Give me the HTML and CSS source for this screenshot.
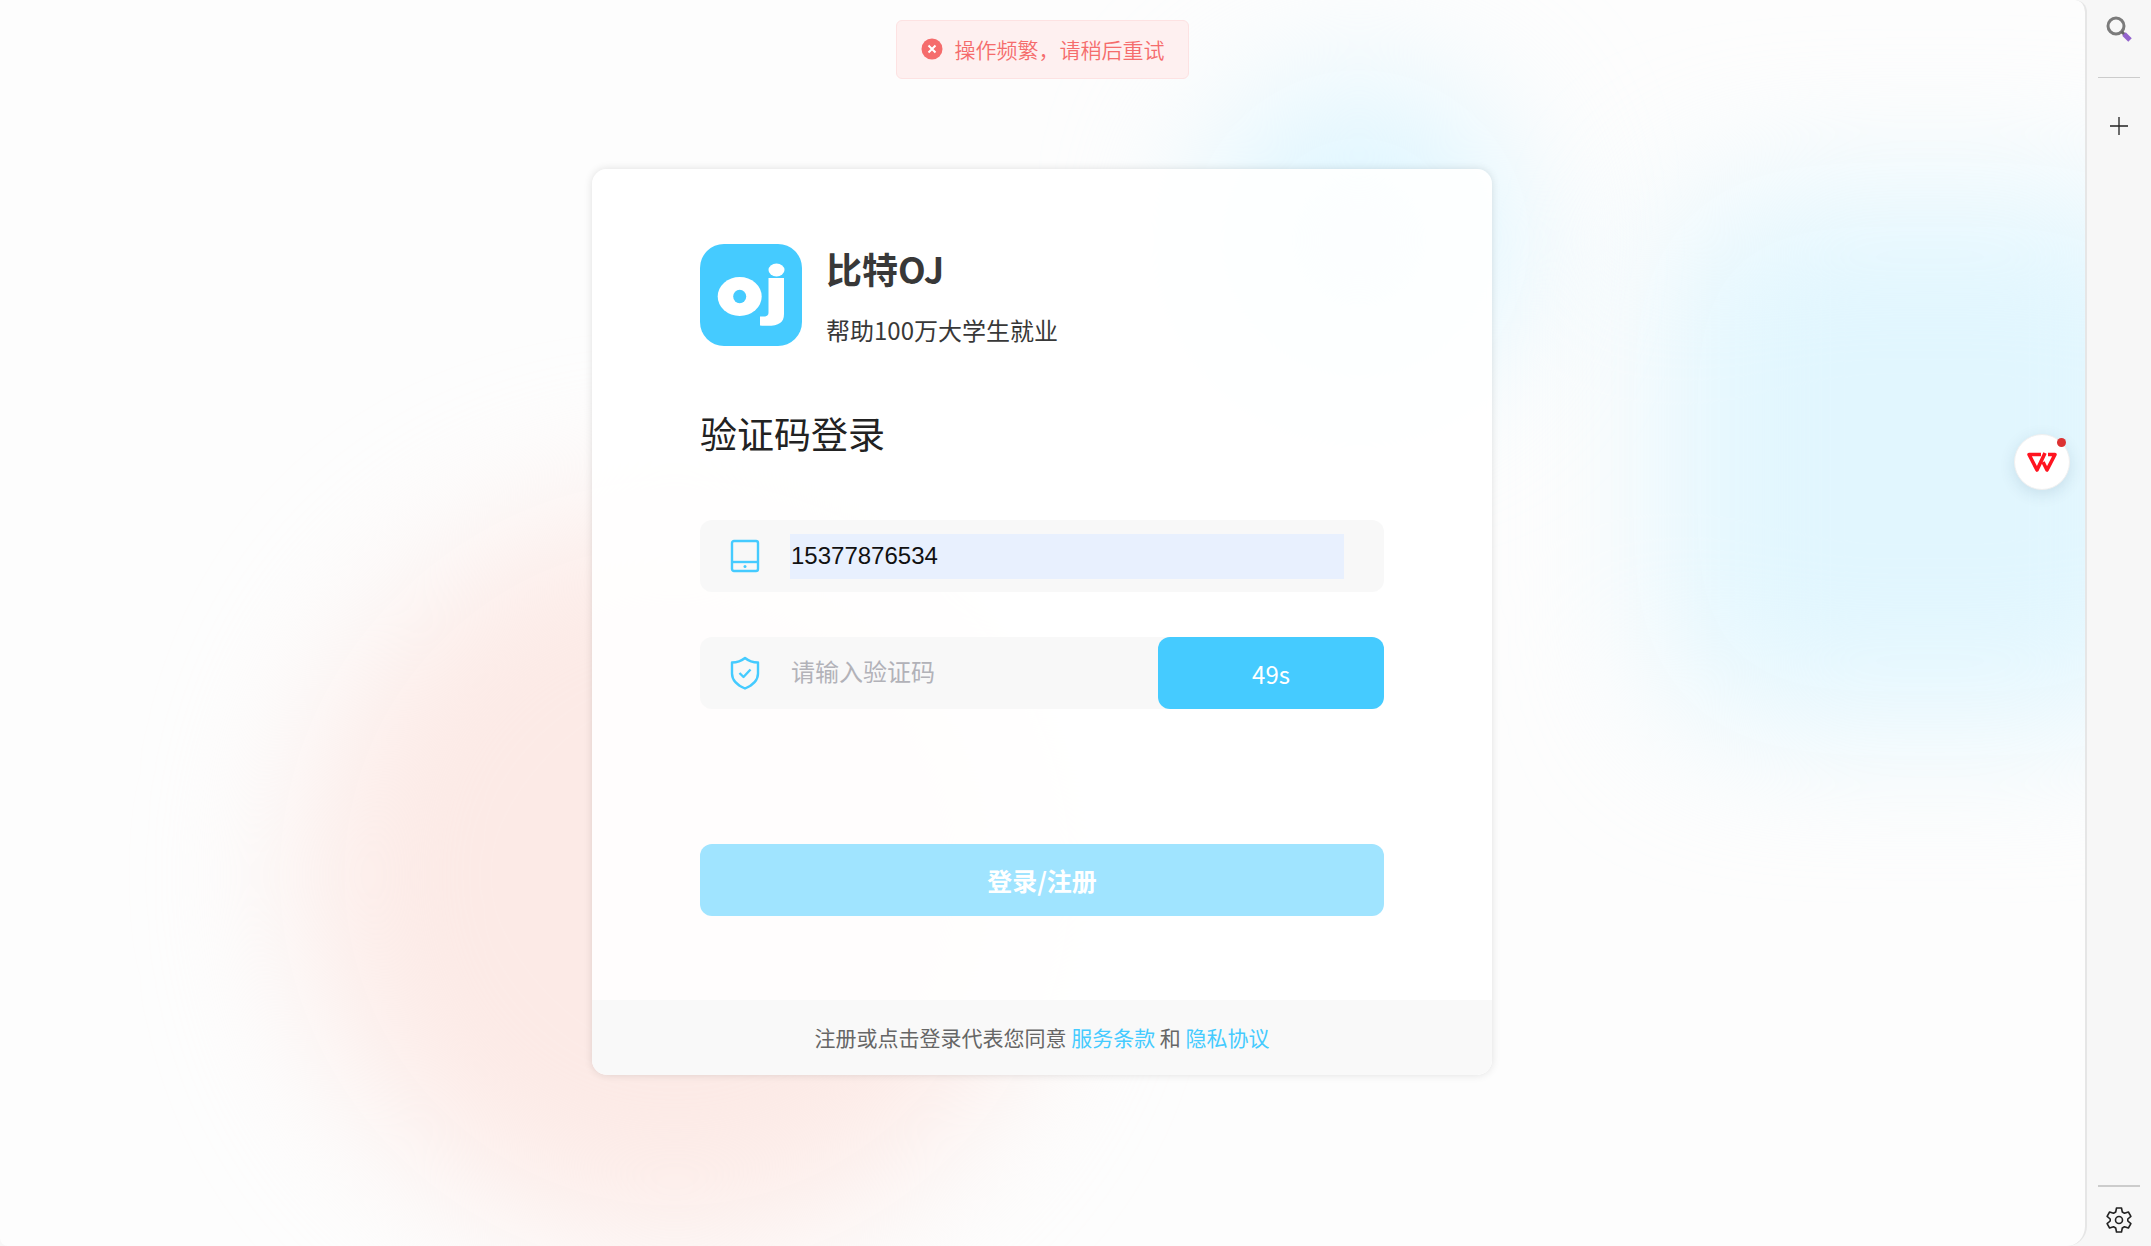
FILE: index.html
```html
<!DOCTYPE html>
<html lang="zh-CN">
<head>
    <meta charset="UTF-8">
    <meta name="viewport" content="width=device-width, initial-scale=1.0">
    <title>比特OJ</title>
    <link rel="stylesheet" href="styles.css">
</head>
<body>
    <main class="page">
        <div class="blob blob-red"></div>
        <div class="blob blob-top"></div>
        <div class="blob blob-right"></div>

        <div class="message" role="alert">
            <svg class="message-icon" viewBox="0 0 22 22" aria-hidden="true">
                <circle cx="11" cy="11" r="10.5" fill="#f56c6c"/>
                <path d="M7.5 7.5l7 7M14.5 7.5l-7 7" stroke="#fff" stroke-width="2"/>
            </svg>
            <span>操作频繁，请稍后重试</span>
        </div>

        <section class="card">
            <div class="card-body">
                <div class="brand">
                    <svg class="logo" viewBox="0 0 102 102" aria-label="oj">
                        <rect width="102" height="102" rx="24" fill="#45cbff"/>
                        <ellipse cx="39.700" cy="52.500" rx="22" ry="19.500" fill="#fff"/>
                        <ellipse cx="39.700" cy="52.500" rx="6.500" ry="6.800" fill="#45cbff"/>
                        <ellipse cx="76.500" cy="26" rx="8" ry="6.500" fill="#fff"/>
                        <path d="M68.500 34h15.500v36c0 10-7 13-24 11.500v-9c6 .5 8.500-.5 8.500-4z" fill="#fff"/>
                    </svg>
                    <div class="brand-text">
                        <h1>比特OJ</h1>
                        <p>帮助100万大学生就业</p>
                    </div>
                </div>

                <h2>验证码登录</h2>

                <form id="loginForm">
                    <div class="form-group">
                        <label for="phone" aria-label="手机号">
                            <svg class="field-icon" viewBox="0 0 32 36" aria-hidden="true">
                                <rect x="3" y="3" width="26" height="30" rx="2"/>
                                <path d="M3 24h26"/>
                                <circle class="dot" cx="16" cy="28.500" r="1.500"/>
                            </svg>
                        </label>
                        <input type="tel" id="phone" class="autofilled" value="15377876534">
                    </div>
                    <div class="form-group code-group">
                        <label for="code" aria-label="验证码">
                            <svg class="field-icon" viewBox="0 0 32 36" aria-hidden="true">
                                <path d="M16 3c3 2.500 8 4.500 13 4.500v11c0 7-6 12-13 15-7-3-13-8-13-15v-11c5 0 10-2 13-4.500z"/>
                                <path d="M10.500 18l4 4 7-7.500"/>
                            </svg>
                        </label>
                        <input type="text" id="code" placeholder="请输入验证码">
                        <button type="button" class="code-button">49s</button>
                    </div>
                    <button type="submit" class="submit-button">登录/注册</button>
                </form>
            </div>
            <footer class="card-footer">
                注册或点击登录代表您同意 <a href="#">服务条款</a> 和 <a href="#">隐私协议</a>
            </footer>
        </section>

        <button type="button" class="float-button" aria-label="WPS">
            <svg viewBox="0 0 32 22" aria-hidden="true">
                <g fill="none" stroke="#ff1420" stroke-width="3.600" stroke-linejoin="round">
                    <path d="M15 3.500H3L11 19 19 2"/>
                    <path d="M22 3.500h7L21 19l-4-8"/>
                </g>
            </svg>
            <span class="badge"></span>
        </button>
    </main>

    <aside class="sidebar">
        <button type="button" class="side-button" aria-label="搜索">
            <svg viewBox="0 0 28 28" aria-hidden="true">
                <circle cx="11" cy="11" r="8" fill="none" stroke="#7b7b7b" stroke-width="3"/>
                <path d="M16.500 16.500l3 3" stroke="#666" stroke-width="3"/>
                <path d="M19 19l6 6" stroke="#9364cd" stroke-width="5"/>
            </svg>
        </button>
        <hr>
        <button type="button" class="side-button" aria-label="添加">
            <svg viewBox="0 0 28 28" aria-hidden="true">
                <path d="M14 5v18M5 14h18" stroke="#222" stroke-width="1.300"/>
            </svg>
        </button>
        <hr class="push">
        <button type="button" class="side-button" aria-label="设置">
            <svg viewBox="0 0 28 28" aria-hidden="true">
                <g fill="none" stroke="#222" stroke-width="1.600" stroke-linejoin="round">
                    <path d="M11.500 2h5l.8 4 2.200 1.300 3.900-1.300 2.500 4.300-3.100 2.700v2l3.100 2.700-2.500 4.300-3.900-1.300-2.200 1.300-.8 4h-5l-.8-4-2.200-1.300-3.900 1.300-2.500-4.300 3.100-2.700v-2l-3.100-2.700 2.500-4.300 3.900 1.300 2.200-1.300z"/>
                    <circle cx="14" cy="14" r="3.500"/>
                </g>
            </svg>
        </button>
    </aside>
</body>
</html>
```
FILE: styles.css
```css
* {
    box-sizing: border-box;
}
body {
    margin: 0;
    min-height: 100vh;
    display: flex;
    background: #f7f7f7;
    font-family: "Noto Sans CJK SC", sans-serif;
}
h1, h2, p {
    margin: 0;
}
button {
    border: none;
    padding: 0;
    font-family: inherit;
    cursor: pointer;
}
.page {
    flex: 1;
    position: relative;
    overflow: hidden;
    display: flex;
    flex-direction: column;
    align-items: center;
    padding: 20px 21px 20px 20px;
    background: #fdfdfd;
    border-right: 2px solid #e6e6e6;
    border-radius: 0 12px 20px 8px;
}

/* background colour spots */
.blob {
    position: absolute;
    filter: blur(75px);
}
.blob-red {
    left: 305px;
    top: 505px;
    width: 740px;
    height: 740px;
    border-radius: 50%;
    background: #fceae6;
}
.blob-top {
    left: 1204px;
    top: 85px;
    width: 310px;
    height: 310px;
    border-radius: 50%;
    background: #dcf5ff;
}
.blob-right {
    right: -110px;
    top: 194px;
    width: 530px;
    height: 530px;
    border-radius: 100px;
    background: #e1f6fe;
}

.message {
    position: relative;
    display: flex;
    align-items: center;
    gap: 12px;
    height: 59px;
    padding: 0 23px 2px 24px;
    border: 1px solid #fde2e2;
    border-radius: 6px;
    background: #fef0f0;
    color: #f56c6c;
    font-family: "Noto Sans CJK SC DemiLight", "Noto Sans CJK SC", sans-serif;
    font-size: 21px;
    line-height: 30px;
}
.message-icon {
    width: 22px;
    height: 22px;
}

.card {
    position: relative;
    width: 100%;
    max-width: 900px;
    margin-top: 90px;
    border-radius: 15px;
    overflow: hidden;
    background: rgba(255, 255, 255, 0.9);
    box-shadow: 0 0 8px rgba(0, 0, 0, 0.12);
}
.card-body {
    padding: 75px 108px 84px;
}
.brand {
    display: flex;
    gap: 24px;
}
.logo {
    width: 102px;
    height: 102px;
}
.brand-text {
    display: flex;
    flex-direction: column;
    justify-content: space-between;
    color: #383838;
}
.brand-text h1 {
    font-size: 36px;
    line-height: 48px;
}
.brand-text p {
    font-size: 24px;
    line-height: 32px;
}
h2 {
    margin-top: 60px;
    color: #222;
    font-size: 37px;
    font-weight: 400;
    line-height: 54px;
}
.form-group {
    display: flex;
    align-items: center;
    height: 72px;
    margin-bottom: 45px;
    padding: 0 40px 0 29px;
    border-radius: 12px;
    background: rgba(246, 246, 246, 0.8);
}
#loginForm {
    margin-top: 60px;
}
.form-group label {
    display: flex;
    margin-right: 29px;
}
.field-icon {
    width: 32px;
    height: 36px;
    fill: none;
    stroke: #45cbff;
    stroke-width: 2.4;
    stroke-linejoin: round;
}
.field-icon .dot {
    fill: #45cbff;
    stroke: none;
}
.form-group input {
    flex: 1;
    min-width: 0;
    height: 45px;
    padding: 0 1px;
    border: none;
    outline: none;
    background: transparent;
    color: #111;
    font-family: "Liberation Sans", "Noto Sans CJK SC", sans-serif;
    font-size: 24px;
}
.form-group .autofilled {
    background: #e8f0fe;
}
.form-group input::placeholder {
    color: #b2b2b8;
}
.code-group {
    padding-right: 0;
}
.code-button {
    width: 226px;
    height: 72px;
    border-radius: 12px;
    background: #45cbff;
    color: #fff;
    font-size: 24px;
}
.submit-button {
    display: block;
    width: 100%;
    height: 72px;
    margin-top: 135px;
    border-radius: 12px;
    background: #a0e4ff;
    color: #fff;
    font-size: 25px;
    font-weight: 700;
}
.card-footer {
    height: 75px;
    line-height: 75px;
    text-align: center;
    background: rgba(247, 247, 248, 0.8);
    color: #666;
    font-size: 21px;
}
.card-footer a {
    color: #45cbff;
    text-decoration: none;
}

.float-button {
    position: absolute;
    right: 15px;
    top: 434px;
    width: 56px;
    height: 56px;
    display: flex;
    align-items: center;
    justify-content: center;
    border: 1px solid #f0f0f0;
    border-radius: 50%;
    background: #fff;
    box-shadow: 0 4px 16px rgba(0, 60, 90, 0.12);
}
.float-button svg {
    width: 32px;
    height: 22px;
}
.badge {
    position: absolute;
    top: 3px;
    right: 3px;
    width: 9px;
    height: 9px;
    border-radius: 50%;
    background: #dc3232;
}

.sidebar {
    width: 64px;
    display: flex;
    flex-direction: column;
    align-items: center;
    padding: 15px 0 12px;
}
.sidebar hr {
    width: 42px;
    height: 0;
    margin: 34px 0;
    border: none;
    border-top: 1px solid #ccc;
}
.sidebar .push {
    margin: auto 0 19px;
    border-top-width: 2px;
}
.side-button {
    width: 28px;
    height: 28px;
    background: transparent;
}
```
